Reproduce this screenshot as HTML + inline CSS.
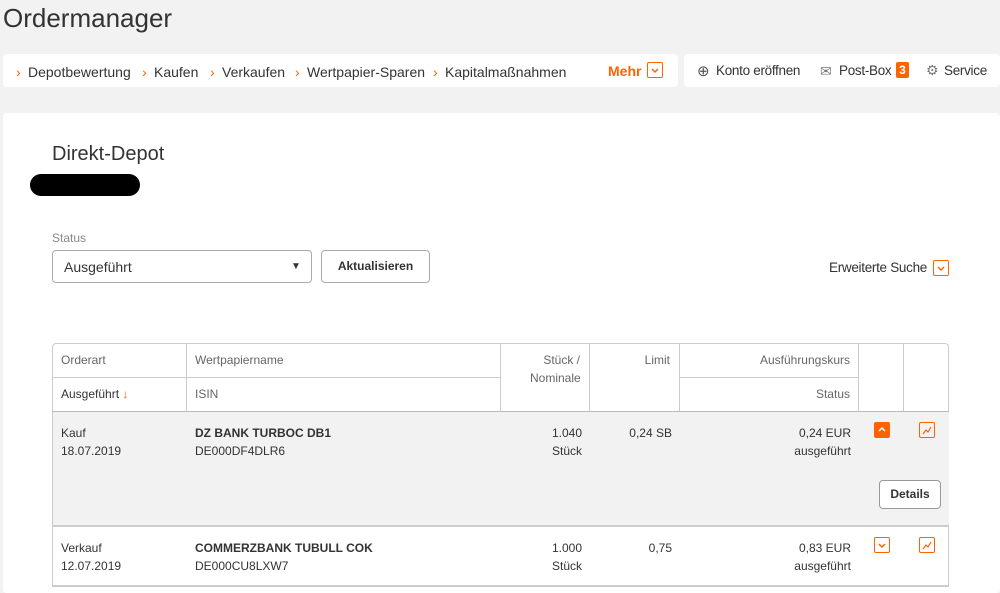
<!DOCTYPE html><html><head><style>
body{margin:0;width:1000px;height:587px;background:#f2f2f2;font-family:"Liberation Sans",sans-serif;color:#333;position:relative;overflow:hidden;font-size:13px}
.a{position:absolute;white-space:nowrap}
.o{color:#ff6200}
.card{position:absolute;background:#fff;border-radius:4px}
.ln{position:absolute;background:#ccc}
.ib{position:absolute;width:16px;height:16px;border:1px solid #ff6200;border-radius:2px;box-sizing:border-box}
.ib svg{position:absolute;left:2px;top:2px}
.n{position:absolute;top:64px;font-size:14px;white-space:nowrap}
.r{font-size:13.5px;letter-spacing:-0.3px}
</style></head><body>
<div class="a" style="left:3px;top:3px;font-size:26px;color:#333">Ordermanager</div>
<div class="card" style="left:3px;top:54px;width:675px;height:33px"></div>
<div class="card" style="left:684px;top:54px;width:316px;height:33px"></div>
<div class="n o" style="left:16px">›</div><div class="n" style="left:28px">Depotbewertung</div>
<div class="n o" style="left:142px">›</div><div class="n" style="left:154px">Kaufen</div>
<div class="n o" style="left:210px">›</div><div class="n" style="left:222px">Verkaufen</div>
<div class="n o" style="left:295px">›</div><div class="n" style="left:307px">Wertpapier-Sparen</div>
<div class="n o" style="left:433px">›</div><div class="n" style="left:445px">Kapitalmaßnahmen</div>
<div class="a o" style="left:608px;top:63px;font-size:14px;font-weight:bold">Mehr</div>
<div class="ib" style="left:647px;top:62px"><svg width="10" height="10"><path d="M2 4l3 3 3-3" stroke="#ff6200" stroke-width="1.5" fill="none"/></svg></div>
<div class="n" style="left:697px;top:62px;font-size:15px;color:#555">⊕</div><div class="n r" style="left:716px;top:63px">Konto eröffnen</div>
<div class="n" style="left:820px;top:63px;color:#777">✉</div><div class="n r" style="left:839px;top:63px">Post-Box</div>
<div class="a" style="left:896px;top:62px;width:13px;height:16px;background:#ff6200;color:#fff;font-weight:bold;font-size:12px;text-align:center;line-height:16px;border-radius:2px">3</div>
<div class="n" style="left:926px;top:62px;color:#777">⚙</div><div class="n r" style="left:944px;top:63px">Service</div>
<div class="card" style="left:3px;top:113px;width:997px;height:480px"></div>
<div class="a" style="left:52px;top:143px;font-size:20px">Direkt-Depot</div>
<div class="a" style="left:30px;top:174px;width:110px;height:22px;background:#000;border-radius:11px"></div>
<div class="a" style="left:52px;top:231px;font-size:12px;color:#888">Status</div>
<div class="a" style="left:52px;top:250px;width:260px;height:33px;border:1px solid #aaa;border-radius:4px;box-sizing:border-box"></div>
<div class="a" style="left:64px;top:259px;font-size:14px">Ausgeführt</div>
<div class="a" style="left:291px;top:261px;font-size:10px">▼</div>
<div class="a" style="left:321px;top:250px;width:109px;height:33px;border:1px solid #aaa;border-radius:4px;box-sizing:border-box;text-align:center;line-height:31px;font-weight:bold;font-size:12px">Aktualisieren</div>
<div class="a r" style="left:829px;top:260px">Erweiterte Suche</div>
<div class="ib" style="left:933px;top:260px"><svg width="10" height="10"><path d="M2 4l3 3 3-3" stroke="#ff6200" stroke-width="1.5" fill="none"/></svg></div>
<div class="a" style="left:52px;top:343px;width:897px;height:244px;border:1px solid #ccc;border-bottom:none;border-radius:4px 4px 0 0;box-sizing:border-box"></div>
<div class="a" style="left:53px;top:411px;width:896px;height:115px;background:#f2f2f2"></div>
<div class="ln" style="left:52px;top:411px;width:897px;height:1px;background:#bbb"></div>
<div class="ln" style="left:52px;top:525px;width:897px;height:2px;background:#ccc"></div>
<div class="ln" style="left:52px;top:585px;width:897px;height:2px;background:#ccc"></div>
<div class="ln" style="left:52px;top:377px;width:448px;height:1px"></div>
<div class="ln" style="left:679px;top:377px;width:179px;height:1px"></div>
<div class="ln" style="left:186px;top:343px;width:1px;height:68px"></div>
<div class="ln" style="left:500px;top:343px;width:1px;height:68px"></div>
<div class="ln" style="left:589px;top:343px;width:1px;height:68px"></div>
<div class="ln" style="left:679px;top:343px;width:1px;height:68px"></div>
<div class="ln" style="left:858px;top:343px;width:1px;height:68px"></div>
<div class="ln" style="left:903px;top:343px;width:1px;height:68px"></div>
<div style="color:#666;font-size:12px">
<div class="a" style="left:61px;top:353px">Orderart</div>
<div class="a" style="left:195px;top:353px">Wertpapiername</div>
<div class="a" style="left:530px;top:353px;text-align:right;width:50px">Stück /<br><span style="line-height:22px">Nominale</span></div>
<div class="a" style="left:620px;top:353px;width:50px;text-align:right">Limit</div>
<div class="a" style="left:700px;top:353px;width:150px;text-align:right">Ausführungskurs</div>
<div class="a" style="left:61px;top:387px;color:#333">Ausgeführt <span class="o" style="font-weight:bold">↓</span></div>
<div class="a" style="left:195px;top:387px">ISIN</div>
<div class="a" style="left:700px;top:387px;width:150px;text-align:right">Status</div>
</div>
<div style="font-size:12px;line-height:18px">
<div class="a" style="left:61px;top:424px">Kauf<br>18.07.2019</div>
<div class="a" style="left:195px;top:424px"><b>DZ BANK TURBOC DB1</b><br>DE000DF4DLR6</div>
<div class="a" style="left:530px;top:424px;width:52px;text-align:right">1.040<br>Stück</div>
<div class="a" style="left:610px;top:424px;width:62px;text-align:right">0,24 SB</div>
<div class="a" style="left:700px;top:424px;width:151px;text-align:right">0,24 EUR<br>ausgeführt</div>
<div class="ib" style="left:874px;top:422px;background:#ff6200"><svg width="10" height="10"><path d="M2 6l3-3 3 3" stroke="#fff" stroke-width="1.5" fill="none"/></svg></div>
<div class="ib" style="left:919px;top:422px"><svg width="10" height="10"><path d="M1 9l3-4 2 2 3-5" stroke="#ff6200" stroke-width="1.2" fill="none"/></svg></div>
<div class="a" style="left:879px;top:480px;width:62px;height:29px;border:1px solid #999;border-radius:4px;background:#fff;box-sizing:border-box;text-align:center;line-height:27px;font-weight:bold">Details</div>
<div class="a" style="left:61px;top:539px">Verkauf<br>12.07.2019</div>
<div class="a" style="left:195px;top:539px"><b>COMMERZBANK TUBULL COK</b><br>DE000CU8LXW7</div>
<div class="a" style="left:530px;top:539px;width:52px;text-align:right">1.000<br>Stück</div>
<div class="a" style="left:610px;top:539px;width:62px;text-align:right">0,75</div>
<div class="a" style="left:700px;top:539px;width:151px;text-align:right">0,83 EUR<br>ausgeführt</div>
<div class="ib" style="left:874px;top:537px"><svg width="10" height="10"><path d="M2 4l3 3 3-3" stroke="#ff6200" stroke-width="1.5" fill="none"/></svg></div>
<div class="ib" style="left:919px;top:537px"><svg width="10" height="10"><path d="M1 9l3-4 2 2 3-5" stroke="#ff6200" stroke-width="1.2" fill="none"/></svg></div>
</div>
</body></html>
